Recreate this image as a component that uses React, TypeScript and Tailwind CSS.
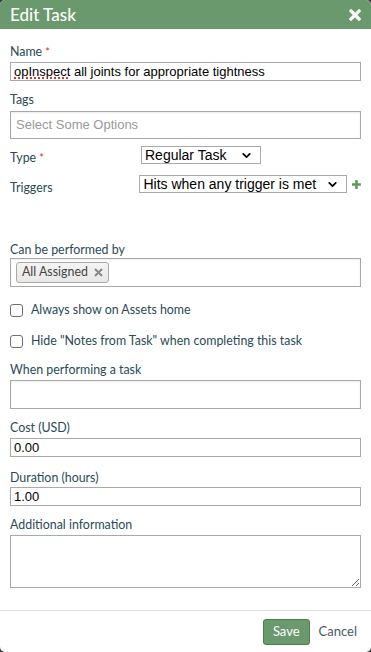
import { ChevronDown } from 'lucide-react'

const label = "text-[12.4px] leading-4 text-[#2b4a57] font-['Lato',sans-serif]"
const box = "border border-[#a9a9a9] bg-white font-['Liberation_Sans',Arial,sans-serif] text-[13px]"

function Req() {
  return <span className='text-[#d9302c] text-[11px] align-top ml-[3px]'>*</span>
}

function FakeSelect({ value, width }: { value: string, width: string }) {
  return (
    <div className={`${box} ${width} h-[18px] flex items-center justify-between pl-[3px] pr-[7px] text-[14px] text-black border-[#7a7a7a]`}>
      <span>{value}</span>
      <ChevronDown className='size-[13px]' strokeWidth={3.2} />
    </div>
  )
}

function CheckRow({ text }: { text: string }) {
  return (
    <div className='h-4 flex items-center gap-[8px]'>
      <div className='size-[13px] rounded-[3px] border border-[#6f6f6f] bg-white' />
      <span className={label}>{text}</span>
    </div>
  )
}

export default function App() {
  return (
    <div className='w-[371px] h-[652px] bg-[#3a3a3a]'>
      <div className='h-full rounded-[5px] overflow-hidden bg-white flex flex-col'>
        <div className='h-[29px] shrink-0 bg-[#6a996d] flex items-center justify-between pl-[10px] pr-[10px]'>
          <span className="text-white text-[17px] font-['Lato',sans-serif] font-medium">Edit Task</span>
          <svg width='12' height='12' viewBox='0 0 12 12'>
            <path d='M2 2 L10 10 M10 2 L2 10' stroke='white' strokeWidth='3.2' strokeLinecap='square' />
          </svg>
        </div>

        <div className='flex-1 px-[10px] pt-[15px]'>
          <div className={label}>Name<Req /></div>
          <div className={`${box} mt-[2px] h-[19px] flex items-center pl-[3px] text-black`}>
            <span className='underline decoration-dotted decoration-[#e0302c] decoration-2 underline-offset-[2px]'>opInspect</span>
            <span>&nbsp;all joints for appropriate tightness</span>
          </div>

          <div className={`${label} mt-[11px]`}>Tags</div>
          <div className={`${box} mt-[3px] h-[28px] flex items-center pl-[5px] text-[#999] shadow-[inset_0_1px_2px_rgba(0,0,0,0.08)]`}>
            Select Some Options
          </div>

          <div className='mt-[7px] h-[18px] flex items-start'>
            <div className={`${label} w-[131px] pt-[4px]`}>Type<Req /></div>
            <FakeSelect value='Regular Task' width='w-[120px]' />
          </div>

          <div className='mt-[11px] h-[18px] flex items-start'>
            <div className={`${label} w-[131px] pt-[5px]`}>Triggers</div>
            <FakeSelect value='Hits when any trigger is met' width='w-[210px]' />
            <svg width='9' height='9' viewBox='0 0 9 9' className='ml-[5px] mt-[5px]'>
              <path d='M4.5 0 V9 M0 4.5 H9' stroke='#5c9c5c' strokeWidth='2.6' />
            </svg>
          </div>

          <div className={`${label} mt-[49px]`}>Can be performed by</div>
          <div className={`${box} h-[29px] flex items-center pl-[5px] shadow-[inset_0_1px_2px_rgba(0,0,0,0.08)]`}>
            <div className="h-[21px] flex items-center gap-[6px] px-[5px] rounded-[3px] border border-[#aaa] bg-gradient-to-b from-[#f4f4f4] to-[#e8e8e8] font-['Lato',sans-serif] text-[12.4px] text-[#444]">
              All Assigned
              <svg width='9' height='9' viewBox='0 0 9 9'>
                <path d='M1 1 L8 8 M8 1 L1 8' stroke='#888' strokeWidth='2' />
              </svg>
            </div>
          </div>

          <div className='mt-[15px]'>
            <CheckRow text='Always show on Assets home' />
          </div>
          <div className='mt-[15px]'>
            <CheckRow text='Hide "Notes from Task" when completing this task' />
          </div>

          <div className={`${label} mt-[13px]`}>When performing a task</div>
          <div className={`${box} mt-[2px] h-[29px] shadow-[inset_0_1px_2px_rgba(0,0,0,0.08)]`} />

          <div className={`${label} mt-[11px]`}>Cost (USD)</div>
          <div className={`${box} mt-[2px] h-[19px] flex items-center pl-[3px] text-black`}>0.00</div>

          <div className={`${label} mt-[13px]`}>Duration (hours)</div>
          <div className={`${box} mt-[1px] h-[19px] flex items-center pl-[3px] text-black`}>1.00</div>

          <div className={`${label} mt-[11px]`}>Additional information</div>
          <textarea className={`${box} mt-[2px] block w-full h-[53px] outline-none text-black`} />
        </div>

        <div className='h-[42px] shrink-0 border-t border-[#e2e2e2] flex items-center justify-end pr-[14px] gap-[9px]'>
          <button className="h-[26px] px-[9px] rounded-[3px] bg-[#6a996d] border border-[#4f7a52] text-white text-[13px] font-['Lato',sans-serif]">
            Save
          </button>
          <span className="text-[13px] text-[#4a5a5e] font-['Lato',sans-serif]">Cancel</span>
        </div>
      </div>
    </div>
  )
}
